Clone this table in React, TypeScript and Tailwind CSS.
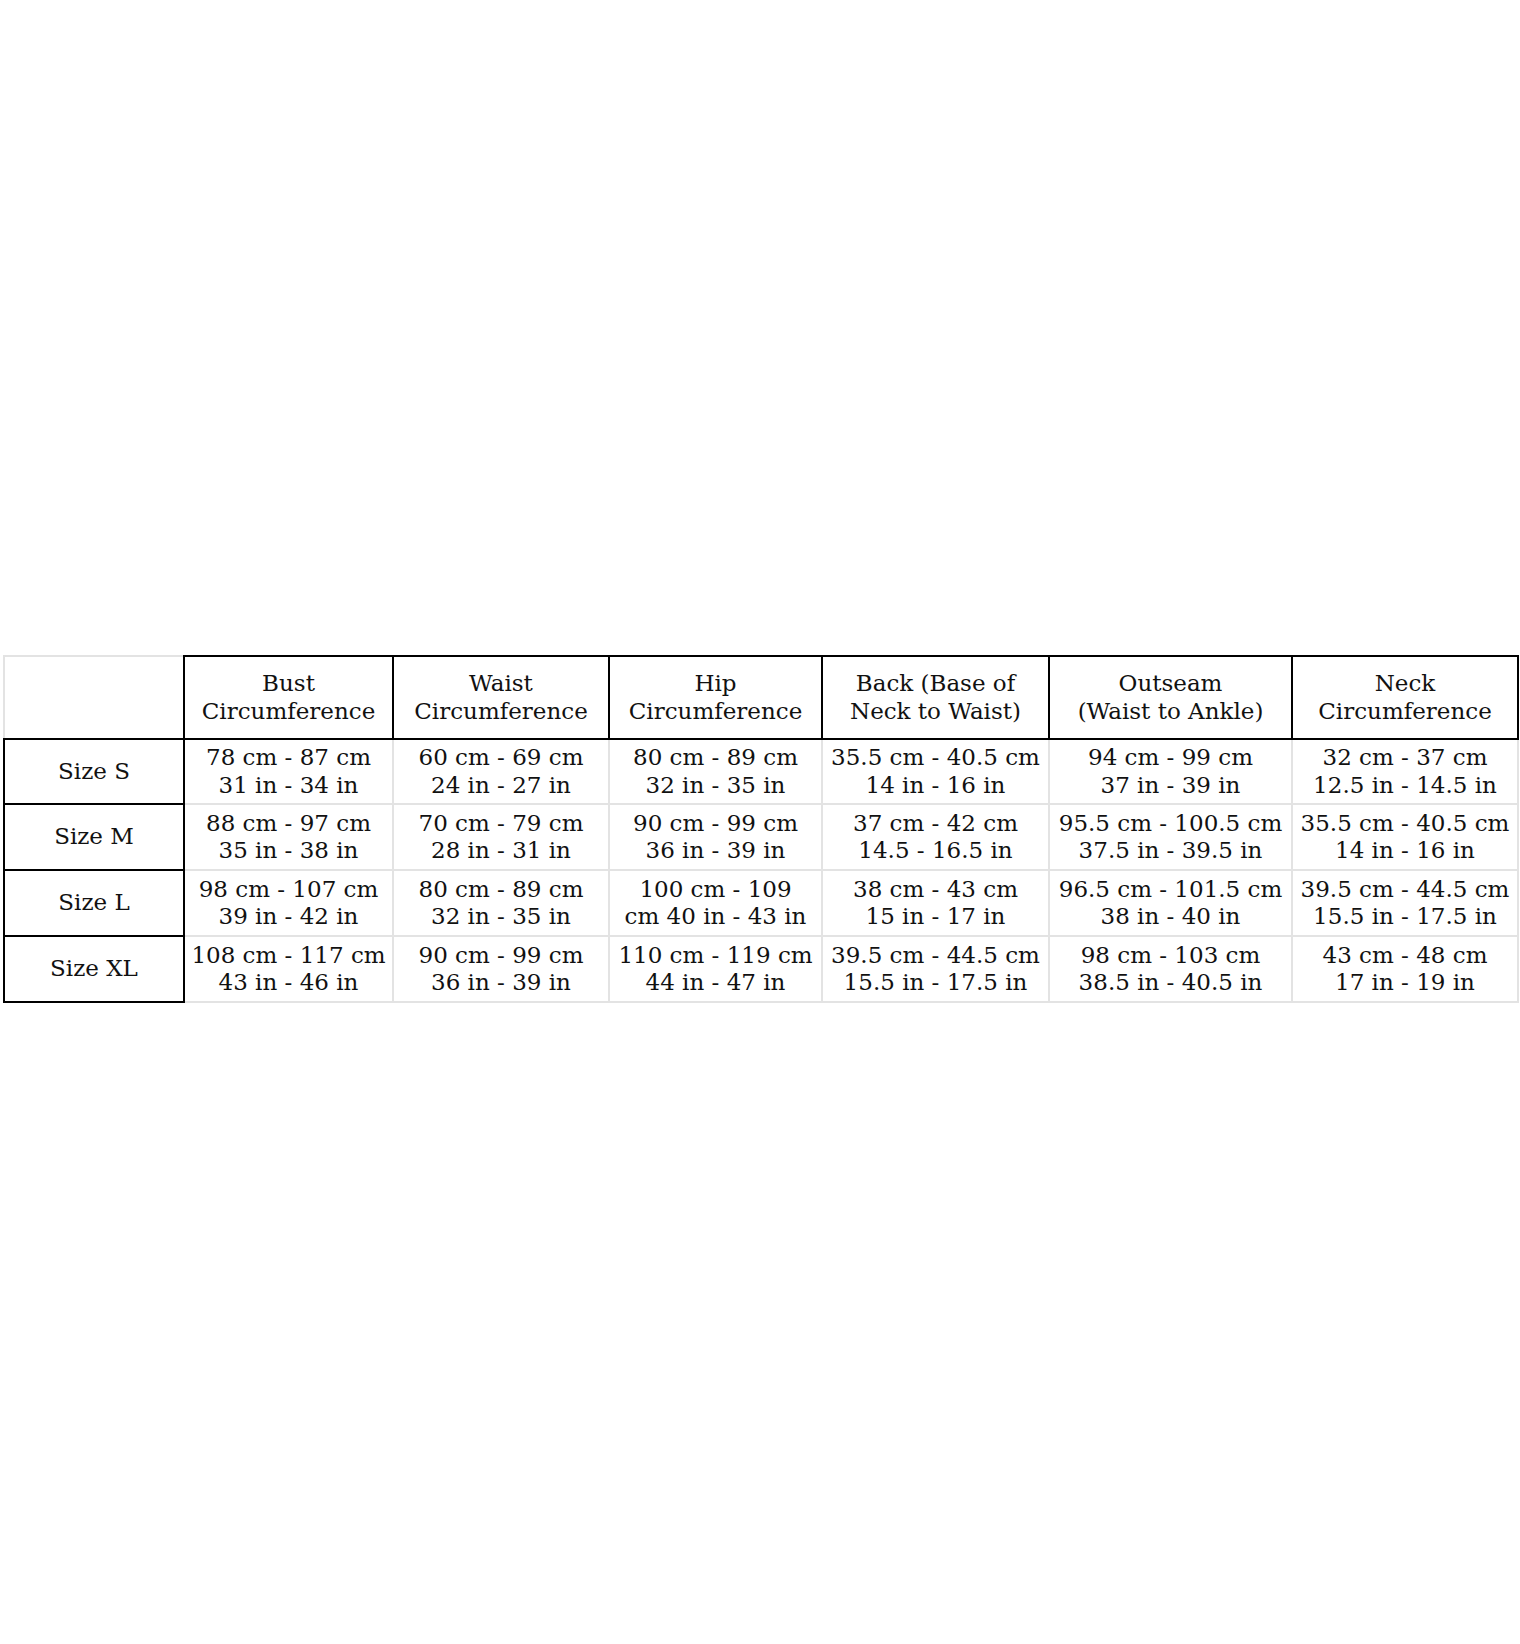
import React from 'react';

const headers = [
  ['Bust', 'Circumference'],
  ['Waist', 'Circumference'],
  ['Hip', 'Circumference'],
  ['Back (Base of', 'Neck to Waist)'],
  ['Outseam', '(Waist to Ankle)'],
  ['Neck', 'Circumference'],
];

const rows: { size: string; h: string; cells: string[][] }[] = [
  {
    size: 'Size S',
    h: 'h-[65px]',
    cells: [
      ['78 cm - 87 cm', '31 in - 34 in'],
      ['60 cm - 69 cm', '24 in - 27 in'],
      ['80 cm - 89 cm', '32 in - 35 in'],
      ['35.5 cm - 40.5 cm', '14 in - 16 in'],
      ['94 cm - 99 cm', '37 in - 39 in'],
      ['32 cm - 37 cm', '12.5 in - 14.5 in'],
    ],
  },
  {
    size: 'Size M',
    h: 'h-[66px]',
    cells: [
      ['88 cm - 97 cm', '35 in - 38 in'],
      ['70 cm - 79 cm', '28 in - 31 in'],
      ['90 cm - 99 cm', '36 in - 39 in'],
      ['37 cm - 42 cm', '14.5 - 16.5 in'],
      ['95.5 cm - 100.5 cm', '37.5 in - 39.5 in'],
      ['35.5 cm - 40.5 cm', '14 in - 16 in'],
    ],
  },
  {
    size: 'Size L',
    h: 'h-[66px]',
    cells: [
      ['98 cm - 107 cm', '39 in - 42 in'],
      ['80 cm - 89 cm', '32 in - 35 in'],
      ['100 cm - 109', 'cm 40 in - 43 in'],
      ['38 cm - 43 cm', '15 in - 17 in'],
      ['96.5 cm - 101.5 cm', '38 in - 40 in'],
      ['39.5 cm - 44.5 cm', '15.5 in - 17.5 in'],
    ],
  },
  {
    size: 'Size XL',
    h: 'h-[66px]',
    cells: [
      ['108 cm - 117 cm', '43 in - 46 in'],
      ['90 cm - 99 cm', '36 in - 39 in'],
      ['110 cm - 119 cm', '44 in - 47 in'],
      ['39.5 cm - 44.5 cm', '15.5 in - 17.5 in'],
      ['98 cm - 103 cm', '38.5 in - 40.5 in'],
      ['43 cm - 48 cm', '17 in - 19 in'],
    ],
  },
];

function Lines({ lines }: { lines: string[] }) {
  return (
    <>
      {lines.map((l, i) => (
        <div key={i} className="whitespace-nowrap">
          {l}
        </div>
      ))}
    </>
  );
}

export default function App() {
  return (
    <div
      className="w-[1520px] h-[1644px] bg-white pt-[655px] pl-[3px] text-[#111] text-[23px] leading-[27.5px]"
      style={{ fontFamily: '"DejaVu Serif", "Liberation Serif", serif' }}
    >
      <table className="table-fixed border-collapse w-[1514px]">
        <colgroup>
          <col className="w-[180px]" />
          <col className="w-[209px]" />
          <col className="w-[216px]" />
          <col className="w-[213px]" />
          <col className="w-[227px]" />
          <col className="w-[243px]" />
          <col className="w-[226px]" />
        </colgroup>
        <thead>
          <tr className="h-[83px]">
            <th className="border-2 border-t-[#e3e3e3] border-l-[#e3e3e3] border-r-black border-b-black font-normal" />
            {headers.map((h, i) => (
              <th key={i} className="border-2 border-black font-normal text-center align-middle px-1">
                <Lines lines={h} />
              </th>
            ))}
          </tr>
        </thead>
        <tbody>
          {rows.map((r) => (
            <tr key={r.size} className={r.h}>
              <td className="border-2 border-black text-center align-middle">{r.size}</td>
              {r.cells.map((c, i) => (
                <td key={i} className="border-2 border-[#e3e3e3] text-center align-middle px-0 overflow-visible">
                  <Lines lines={c} />
                </td>
              ))}
            </tr>
          ))}
        </tbody>
      </table>
    </div>
  );
}
